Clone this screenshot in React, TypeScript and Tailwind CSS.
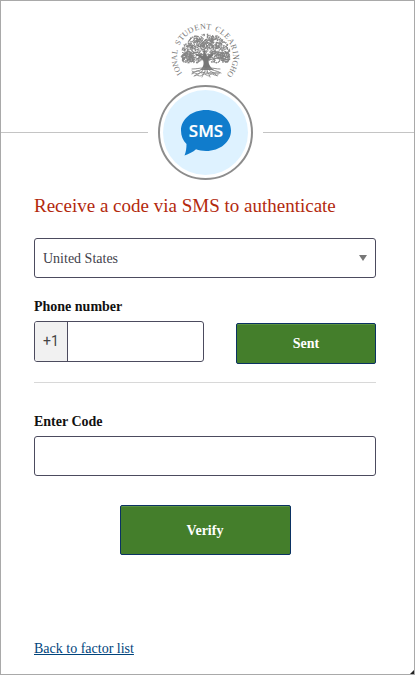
import React from "react";

const ringLetters: [string, number][] = [
  ["I", -123], ["O", -114], ["N", -103], ["A", -91], ["L", -80],
  ["S", -62], ["T", -51], ["U", -40], ["D", -28], ["E", -16], ["N", -4], ["T", 7],
  ["C", 25], ["L", 36], ["E", 47], ["A", 59], ["R", 71], ["I", 81], ["N", 90], ["G", 102], ["H", 113], ["O", 124],
];

function makeLeaves() {
  let seed = 11;
  const rand = () => {
    seed = (seed * 16807) % 2147483647;
    return seed / 2147483647;
  };
  const clusters = [
    [40, 20, 9, 7], [31, 22, 8, 7], [49, 21, 9, 7], [24, 29, 7, 7], [57, 28, 8, 8],
    [22, 37, 6, 5], [60, 36, 5, 6], [30, 36, 8, 6], [51, 36, 8, 6], [41, 29, 9, 8],
  ];
  const leaves: { x: number; y: number; a: number }[] = [];
  clusters.forEach(([cx, cy, rx, ry]) => {
    for (let i = 0; i < 110; i++) {
      const t = rand() * Math.PI * 2;
      const d = Math.sqrt(rand());
      leaves.push({ x: cx + Math.cos(t) * rx * d, y: cy + Math.sin(t) * ry * d, a: rand() * 180 });
    }
  });
  return leaves;
}

const leaves = makeLeaves();

function ClearinghouseLogo() {
  return (
    <svg viewBox="0 0 82 64" className="h-16 w-[82px]" role="img" aria-label="National Student Clearinghouse">
      <g fill="#777777" fontFamily="'Liberation Serif', serif" fontSize="8" textAnchor="middle">
        {ringLetters.map(([letter, angle], i) => (
          <text key={i} x="40" y="8" transform={`rotate(${angle} 40 36)`}>{letter}</text>
        ))}
      </g>
      <g fill="#858585">
        {leaves.map((leaf, i) => (
          <ellipse key={i} cx={leaf.x} cy={leaf.y} rx="0.9" ry="0.5" transform={`rotate(${leaf.a} ${leaf.x} ${leaf.y})`} />
        ))}
      </g>
      <path d="M35 49c4-3 4-7 3-10l-9-7 9 3 1-8 3 9 9-5-7 7c-1 4 0 7 5 11z" fill="#777777" />
      <g fill="none" stroke="#858585" strokeWidth="0.9" strokeLinecap="round">
        <path d="M38 39 27 36M44 39l12-3" />
        <path d="M38 47c-4 0-6 1-11 1M39 47c-2 3-7 2-12 5M39 47c0 4-6 5-9 8M40 47c1 4-2 6-3 9M42 47c-1 3 2 5 3 9M43 47c1 4 6 4 9 8M44 47c3 3 7 2 12 5M45 47c4 0 6 1 10 1" />
        <path strokeDasharray="2 1" d="M27 50c3 3 5-2 8 1s5-2 8 1 8-3 12 0M27 53c3-3 5 2 8-1s6 3 9 0 7 3 11 0M29 55c3-3 5 2 8-1s6 3 8 0 5 2 8 0" />
      </g>
    </svg>
  );
}

function SmsIcon() {
  return (
    <svg viewBox="0 0 50 46" className="h-[46px] w-[50px]" role="img" aria-label="SMS">
      <path fill="#107ccc" d="M25 0C39 0 50 9 50 20.500S39 41 25 41c-4 0-7-.5-10-1.700C12 42 8 44 3.500 45.500 5 42 5.500 38 5.500 34 2 30.500 0 26 0 20.500 0 9 11 0 25 0z" />
      <text x="25" y="27" textAnchor="middle" fill="#fff" stroke="#fff" strokeWidth="0.2" fontFamily="'Open Sans', 'Noto Sans', sans-serif" fontWeight="600" fontSize="17">SMS</text>
    </svg>
  );
}

const label = "block text-[14px] leading-[16px] font-bold text-[#111111]";
const green = "rounded-[2px] border border-[#0b3263] bg-[#447e2b] text-[14px] font-bold text-white shadow-[inset_0_1px_0_#5b9240]";

export default function App() {
  return (
    <main className="relative border border-[#a9a9a9] bg-white font-['Liberation_Serif','Times_New_Roman',serif] text-[14px]">
      <header className="grid grid-cols-[49fr_115px_50fr] items-center pt-5">
        <div className="col-start-2 flex h-16 justify-center">
          <ClearinghouseLogo />
        </div>
        <div className="col-start-1 h-px bg-[#c4c4c4]" />
        <div className="mx-auto flex size-[95px] items-center justify-center rounded-full border-2 border-[#8c8c8c] p-[3px]">
          <div className="flex size-full items-center justify-center rounded-full bg-[#def2ff]">
            <SmsIcon />
          </div>
        </div>
        <div className="h-px bg-[#c4c4c4]" />
      </header>

      <form className="pr-[38px] pl-[33px]" onSubmit={(e) => e.preventDefault()}>
        <h1 className="mt-[14px] text-[19px] leading-6 text-[#b3290d]">Receive a code via SMS to authenticate</h1>

        <div className="mt-5 grid items-center">
          <select aria-label="Country" className="col-start-1 row-start-1 h-10 w-full appearance-none rounded-[3px] border border-[#4c4b5e] bg-white px-2 text-[14px] text-[#3f3f4b]">
            <option>United States</option>
          </select>
          <svg viewBox="0 0 8 6" className="pointer-events-none col-start-1 row-start-1 mr-[9px] h-[6px] w-2 justify-self-end" aria-hidden="true">
            <path d="M0 0h8L4 6z" fill="#777777" />
          </svg>
        </div>

        <div className="mt-[21px] flex items-end justify-between gap-8">
          <div className="w-[170px]">
            <label htmlFor="phone" className={label}>Phone number</label>
            <div className="mt-[6px] flex h-[41px] overflow-hidden rounded-[3px] border border-[#4c4b5e]">
              <span className="flex w-[33px] items-center justify-center border-r border-[#4c4b5e] bg-[#f1f1f1] font-[Roboto,sans-serif] text-[14px] text-[#444444]">+1</span>
              <input id="phone" type="tel" className="min-w-0 flex-1 px-2 outline-none" />
            </div>
          </div>
          <button type="button" className={`-mb-[2px] h-[41px] min-w-0 flex-1 ${green}`}>Sent</button>
        </div>

        <hr className="mt-5 border-[#d8d8d8]" />

        <label htmlFor="code" className={`mt-[31px] ${label}`}>Enter Code</label>
        <input id="code" type="text" className="mt-[6px] block h-10 w-full rounded-[3px] border border-[#4c4b5e] px-2 outline-none" />

        <div className="mt-[29px] flex justify-center">
          <button type="submit" className={`h-[50px] w-1/2 ${green}`}>Verify</button>
        </div>

        <div className="mt-[86px] pb-[17px] leading-4">
          <a href="#factors" className="text-[#00447c] underline">Back to factor list</a>
        </div>
      </form>

      <svg viewBox="0 0 4 4" className="absolute right-0 bottom-0 size-1" aria-hidden="true">
        <path d="M4 0v4H0z" fill="#222222" />
      </svg>
    </main>
  );
}
